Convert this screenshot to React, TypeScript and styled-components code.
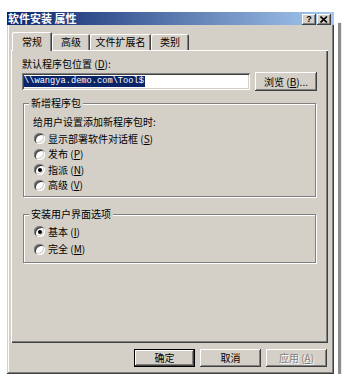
import React from "react";
import styled, { createGlobalStyle } from "styled-components";

const GlobalStyle = createGlobalStyle`
  html, body {
    margin: 0;
    padding: 0;
    background: #ffffff;
  }
  body {
    font-family: "Noto Sans CJK SC", "Liberation Sans", sans-serif;
    font-size: 10px;
    color: #000;
  }
`;

const FACE = "#d4d0c8";

const Page = styled.div`
  padding: 12px 0 0 7px;
`;

const Window = styled.div`
  width: 327px;
  height: 362px;
  box-sizing: border-box;
  background: ${FACE};
  display: flex;
  flex-direction: column;
  box-shadow: inset -1px -1px #404040, inset 1px 1px ${FACE},
    inset -2px -2px #808080, inset 2px 2px #ffffff, 0 0 0 4px #ffffff,
    7px 11px 1px #8c8c8c;
`;

const TitleBar = styled.div`
  height: 13px;
  display: flex;
  align-items: center;
  padding: 0 3px 0 1px;
  background: linear-gradient(to right, #0a246a, #a6caf0);
`;

const TitleText = styled.span`
  flex: 1;
  color: #ffffff;
  font-size: 11px;
  font-weight: 700;
  line-height: 13px;
  white-space: pre;
`;

const CaptionButtons = styled.div`
  display: flex;
  gap: 1px;
  margin-top: 2px;
`;

const CaptionButton = styled.div`
  width: 14px;
  height: 11px;
  box-sizing: border-box;
  background: ${FACE};
  display: flex;
  align-items: center;
  justify-content: center;
  font-family: "Liberation Sans", sans-serif;
  font-weight: 700;
  font-size: 9px;
  line-height: 9px;
  box-shadow: inset -1px -1px #404040, inset 1px 1px #ffffff,
    inset -2px -2px #808080;
`;

const Body = styled.div`
  flex: 1;
  display: flex;
  flex-direction: column;
  padding: 7px 6px 7px 4px;
`;

const TabRow = styled.div`
  display: flex;
  align-items: flex-end;
  height: 18px;
  padding-left: 1px;
`;

const Tab = styled.div<{ $w: number; $active?: boolean }>`
  width: ${({ $w }) => $w}px;
  height: ${({ $active }) => ($active ? 19 : 16)}px;
  margin-bottom: ${({ $active }) => ($active ? -1 : 0)}px;
  position: relative;
  z-index: ${({ $active }) => ($active ? 1 : 0)};
  box-sizing: border-box;
  background: ${FACE};
  border-radius: 2px 2px 0 0;
  display: flex;
  align-items: center;
  justify-content: center;
  line-height: 12px;
  box-shadow: inset 1px 1px #ffffff, inset -1px 0 #404040,
    inset -2px 0 #808080;
`;

const Panel = styled.div`
  flex: 1;
  display: flex;
  flex-direction: column;
  padding: 8px 11px 0 11px;
  box-shadow: inset 1px 1px #ffffff, inset -1px -1px #404040,
    inset -2px -2px #808080;
`;

const FieldLabel = styled.div`
  line-height: 12px;
  height: 12px;
`;

const InputRow = styled.div`
  display: flex;
  align-items: center;
  gap: 5px;
  height: 19px;
  margin-top: 2px;
`;

const TextBox = styled.div`
  width: 228px;
  height: 17px;
  box-sizing: border-box;
  padding: 0 2px;
  background: #ffffff;
  display: flex;
  align-items: center;
  box-shadow: inset 1px 1px #808080, inset -1px -1px #ffffff,
    inset 2px 2px #404040, inset -2px -2px ${FACE};
`;

const Selected = styled.span`
  background: #0a246a;
  color: #ffffff;
  font-family: "Liberation Mono", monospace;
  font-size: 8.7px;
  line-height: 11px;
  padding: 0 1px 0 0;
`;

const PushButton = styled.button<{ $w: number; $h: number; $default?: boolean }>`
  width: ${({ $w }) => $w}px;
  height: ${({ $h }) => $h}px;
  padding: 0;
  border: none;
  background: ${FACE};
  font-family: inherit;
  font-size: 10px;
  line-height: 12px;
  color: #000;
  box-shadow: ${({ $default }) =>
    $default
      ? `inset 0 0 0 1px #000000, inset -2px -2px #404040, inset 2px 2px #ffffff, inset -3px -3px #808080`
      : `inset -1px -1px #404040, inset 1px 1px #ffffff, inset -2px -2px #808080`};

  &:disabled {
    color: #808080;
    text-shadow: 1px 1px #ffffff;
  }
`;

const GroupBox = styled.div<{ $top: number; $padTop: number; $padBottom: number }>`
  position: relative;
  margin: ${({ $top }) => $top}px 1px 0 1px;
  padding: ${({ $padTop }) => $padTop}px 8px ${({ $padBottom }) => $padBottom}px 9px;
  border: 1px solid #808080;
  box-shadow: inset 1px 1px #ffffff, 1px 1px #ffffff;
`;

const GroupTitle = styled.span`
  position: absolute;
  top: -7px;
  left: 5px;
  padding: 0 2px;
  line-height: 12px;
  background: ${FACE};
`;

const Hint = styled.div`
  line-height: 12px;
  height: 12px;
  margin-bottom: 3px;
`;

const RadioRow = styled.div<{ $h: number }>`
  display: flex;
  align-items: center;
  gap: 3px;
  height: ${({ $h }) => $h}px;
  margin-left: 1px;
  line-height: 12px;
`;

const RadioCircle = styled.span`
  width: 11px;
  height: 11px;
  border-radius: 50%;
  background: #ffffff;
  display: flex;
  align-items: center;
  justify-content: center;
  box-shadow: inset 1px 1px #808080, inset -1px -1px #ffffff,
    inset 2px 2px #404040, inset -2px -2px ${FACE};
`;

const Dot = styled.span`
  width: 4px;
  height: 4px;
  border-radius: 50%;
  background: #000000;
`;

const Key = styled.u`
  text-underline-offset: 1px;
`;

const Footer = styled.div`
  display: flex;
  justify-content: flex-end;
  gap: 5px;
  margin-top: 6px;
  padding-right: 1px;
`;

type RadioProps = { label: string; keyChar: string; checked?: boolean; h: number };

const Radio = ({ label, keyChar, checked, h }: RadioProps) => (
  <RadioRow $h={h}>
    <RadioCircle>{checked && <Dot />}</RadioCircle>
    <span>
      {label} (<Key>{keyChar}</Key>)
    </span>
  </RadioRow>
);

const CloseGlyph = () => (
  <svg width="8" height="7" viewBox="0 0 8 7">
    <path d="M0.5 0.5 L7 6.5 M7 0.5 L0.5 6.5" stroke="#000" strokeWidth="1.6" />
  </svg>
);

const tabs = [
  { label: "常规", w: 40, active: true },
  { label: "高级", w: 38 },
  { label: "文件扩展名", w: 61 },
  { label: "类别", w: 38 },
];

export default function App() {
  return (
    <>
      <GlobalStyle />
      <Page>
        <Window>
          <TitleBar>
            <TitleText>软件安装 属性</TitleText>
            <CaptionButtons>
              <CaptionButton>?</CaptionButton>
              <CaptionButton>
                <CloseGlyph />
              </CaptionButton>
            </CaptionButtons>
          </TitleBar>

          <Body>
            <TabRow>
              {tabs.map((t) => (
                <Tab key={t.label} $w={t.w} $active={t.active}>
                  {t.label}
                </Tab>
              ))}
            </TabRow>

            <Panel>
              <FieldLabel>
                默认程序包位置 (<Key>D</Key>):
              </FieldLabel>
              <InputRow>
                <TextBox>
                  <Selected>\\wangya.demo.com\Tool$</Selected>
                </TextBox>
                <PushButton $w={62} $h={19}>
                  浏览 (<Key>B</Key>)...
                </PushButton>
              </InputRow>

              <GroupBox $top={12} $padTop={12} $padBottom={3}>
                <GroupTitle>新增程序包</GroupTitle>
                <Hint>给用户设置添加新程序包时:</Hint>
                <Radio label="显示部署软件对话框" keyChar="S" h={15.5} />
                <Radio label="发布" keyChar="P" h={15.5} />
                <Radio label="指派" keyChar="N" h={15.5} checked />
                <Radio label="高级" keyChar="V" h={15.5} />
              </GroupBox>

              <GroupBox $top={17} $padTop={8} $padBottom={4}>
                <GroupTitle>安装用户界面选项</GroupTitle>
                <Radio label="基本" keyChar="I" h={17.5} checked />
                <Radio label="完全" keyChar="M" h={17.5} />
              </GroupBox>
            </Panel>

            <Footer>
              <PushButton $w={61} $h={18} $default>
                确定
              </PushButton>
              <PushButton $w={61} $h={18}>
                取消
              </PushButton>
              <PushButton $w={61} $h={18} disabled>
                应用 (<Key>A</Key>)
              </PushButton>
            </Footer>
          </Body>
        </Window>
      </Page>
    </>
  );
}
